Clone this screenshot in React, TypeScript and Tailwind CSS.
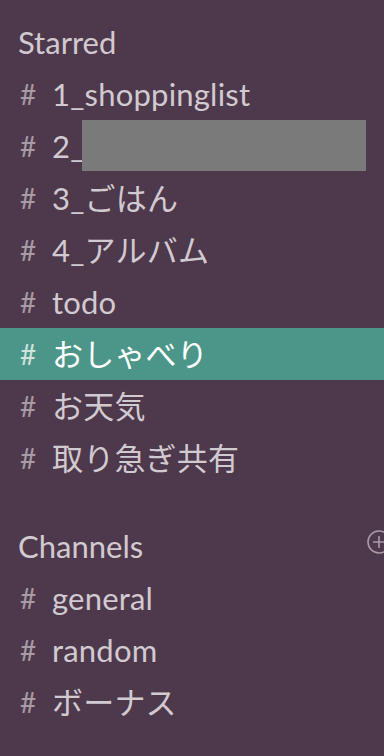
import React from 'react';

const starred = ['1_shoppinglist', '2_', '3_ごはん', '4_アルバム', 'todo', 'おしゃべり', 'お天気', '取り急ぎ共有'];
const channels = ['general', 'random', 'ボーナス'];

function ChannelRow({ name, active = false, redacted = false }: { name: string; active?: boolean; redacted?: boolean }) {
  return (
    <div className={`flex items-center h-[52px] pl-[20px] ${active ? 'bg-[#4c9689]' : ''}`}>
      <span className={`w-[32px] text-[28px] ${active ? 'text-[#cfe3df]' : 'text-[#a89ba6]'}`}>#</span>
      <span className={`tracking-[0.2px] ${active ? 'text-white' : 'text-[#d2cad1]'}`}>{name}</span>
      {redacted && <span className="ml-[-3px] mb-[1px] w-[284px] h-[51px] bg-[#7a7a7a]" />}
    </div>
  );
}

export default function App() {
  return (
    <div
      className="w-[384px] h-[756px] overflow-hidden bg-[#4d394b] pt-[16px] text-[31px] leading-none"
      style={{ fontFamily: 'Lato, "Noto Sans CJK JP", sans-serif' }}
    >
      <div className="h-[52px] flex items-center pl-[18px] text-[#d2cad1]">Starred</div>
      {starred.map(name => (
        <ChannelRow key={name} name={name} active={name === 'おしゃべり'} redacted={name === '2_'} />
      ))}

      {/* Channels section */}
      <div className="mt-[36px] h-[52px] flex items-center justify-between pl-[18px] text-[#d2cad1]">
        <span>Channels</span>
        <svg width="24" height="24" viewBox="0 0 24 24" className="mr-[-7px] mb-[8px]" fill="none" stroke="#a89ba6" strokeWidth="1.6">
          <circle cx="12" cy="12" r="11" />
          <path d="M12 6v12M6 12h12" />
        </svg>
      </div>
      {channels.map(name => (
        <ChannelRow key={name} name={name} />
      ))}
    </div>
  );
}
